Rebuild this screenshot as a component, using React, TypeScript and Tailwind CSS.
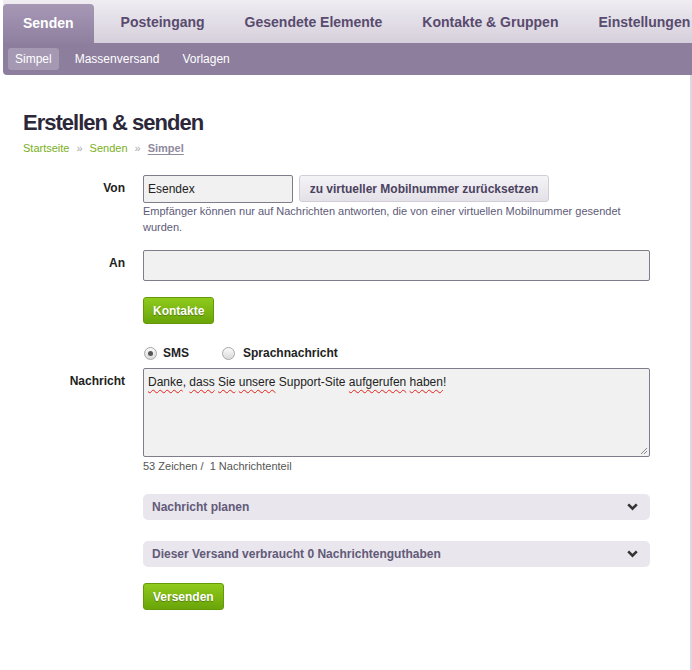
import type { ReactNode } from "react";

const TABS = ["Posteingang", "Gesendete Elemente", "Kontakte & Gruppen", "Einstellungen"];
const SUBNAV = ["Simpel", "Massenversand", "Vorlagen"];

function Chevron() {
    return (
        <svg width="11" height="8" viewBox="0 0 11 8" className="shrink-0">
            <path d="M1.2 1.3 L5.5 5.6 L9.8 1.3" fill="none" stroke="#333" strokeWidth="2.6" strokeLinejoin="miter" />
        </svg>
    );
}

function Radio({ checked }: { checked?: boolean }) {
    return (
        <span className="flex h-[13px] w-[13px] items-center justify-center rounded-full border border-[#a8a8a8] bg-gradient-to-b from-[#fafafa] to-[#dadada]">
            {checked ? <span className="h-[5px] w-[5px] rounded-full bg-[#555]" /> : null}
        </span>
    );
}

function GreenButton({ children }: { children: ReactNode }) {
    return (
        <button className="h-[27px] rounded-[3px] border border-[#649a07] bg-gradient-to-b from-[#8fca1c] to-[#6aa509] px-[9px] text-[12px] font-bold text-white [text-shadow:0_1px_1px_rgba(0,0,0,0.3)]">
            {children}
        </button>
    );
}

function Row({ label, children, className }: { label?: string; children: ReactNode; className?: string }) {
    return (
        <div className={`flex ${className ?? ""}`}>
            <div className="w-[122px] shrink-0 pt-[5px] text-right text-[12px] leading-4 font-bold text-[#222]">{label}</div>
            <div className="ml-[18px] w-[507px]">{children}</div>
        </div>
    );
}

function Accordion({ title }: { title: string }) {
    return (
        <div className="flex h-[26px] items-center justify-between rounded-[5px] bg-[#e9e6ed] pr-[12px] pl-[9px]">
            <span className="text-[12px] font-bold text-[#625a78]">{title}</span>
            <Chevron />
        </div>
    );
}

const squiggle = "underline decoration-wavy decoration-[#e2231a] decoration-1 underline-offset-[3px]";

export default function App() {
    return (
        <div className="h-[670px] w-[692px] overflow-hidden bg-white font-['Liberation_Sans',Arial,sans-serif]">
            <nav className="ml-[3px]">
                <div className="flex h-[43px] items-end overflow-hidden whitespace-nowrap bg-gradient-to-b from-[#efecf2] to-[#d5cfdb] text-[14px] font-bold">
                    <div className="mr-[7px] flex h-[39px] items-center rounded-t-[4px] bg-gradient-to-b from-[#a698b5] to-[#8f80a0] px-5 text-white">
                        Senden
                    </div>
                    {TABS.map((tab) => (
                        <div key={tab} className="flex h-[43px] items-center px-5 pt-[1px] text-[#584b6e]">
                            {tab}
                        </div>
                    ))}
                </div>
                <div className="flex h-[32px] items-center gap-[9px] rounded-bl-[4px] bg-[#8d7e9d] pl-[5px] text-[12px] text-white">
                    {SUBNAV.map((item, i) => (
                        <span
                            key={item}
                            className={`flex h-[22px] items-center rounded-[3px] px-[7px] ${i === 0 ? "bg-[#a498b2]" : ""}`}
                        >
                            {item}
                        </span>
                    ))}
                </div>
            </nav>
            <main className="ml-[3px] h-[595px] border-r-2 border-[#ddd7e3] pt-[35px]">
                <div className="pl-[20px]">
                    <h1 className="text-[22px] leading-[26px] font-bold tracking-[-1px] text-[#2c2839]">Erstellen &amp; senden</h1>
                    <div className="mt-[4px] flex text-[11px] leading-4">
                        <span className="text-[#79b01a]">Startseite</span>
                        <span className="mx-[7px] text-[#aaa]">»</span>
                        <span className="text-[#79b01a]">Senden</span>
                        <span className="mx-[7px] text-[#aaa]">»</span>
                        <span className="font-bold text-[#8f8a9e] underline underline-offset-2">Simpel</span>
                    </div>
                </div>

                <Row label="Von" className="mt-[19px]">
                    <div className="flex gap-[6px]">
                        <div className="flex h-[28px] w-[150px] items-center rounded-[2px] border border-[#7f7d89] bg-[#f1f1f1] pl-[4px] text-[12px] text-[#222]">
                            Esendex
                        </div>
                        <button className="h-[27px] w-[250px] rounded-[3px] border border-[#d2ced8] bg-gradient-to-b from-[#f4f3f6] to-[#e4e1e8] text-[12px] font-bold text-[#4a4260]">
                            zu virtueller Mobilnummer zurücksetzen
                        </button>
                    </div>
                    <p className="text-[11px] leading-4 text-[#5d5a78]">
                        Empfänger können nur auf Nachrichten antworten, die von einer virtuellen Mobilnummer gesendet wurden.
                    </p>
                </Row>

                <Row label="An" className="mt-[15px]">
                    <div className="h-[31px] w-full rounded-[2px] border border-[#7f7d89] bg-[#f1f1f1]" />
                </Row>

                <Row className="mt-[16px]">
                    <GreenButton>Kontakte</GreenButton>
                </Row>

                <Row className="mt-[19px]">
                    <div className="flex h-[20px] items-center text-[12px] font-bold text-[#222]">
                        <span className="ml-[1px]"><Radio checked /></span>
                        <span className="ml-[6px]">SMS</span>
                        <span className="ml-[33px]"><Radio /></span>
                        <span className="ml-[8px]">Sprachnachricht</span>
                    </div>
                </Row>

                <Row label="Nachricht" className="mt-[5px]">
                    <div className="relative h-[89px] w-full rounded-[2px] border border-[#7f7d89] bg-[#f1f1f1] pt-[5px] pl-[4px] text-[12px] leading-4 text-[#222]">
                        <span className={squiggle}>Danke</span>, <span className={squiggle}>dass</span>{" "}
                        <span className={squiggle}>Sie</span> <span className={squiggle}>unsere</span> Support-Site{" "}
                        <span className={squiggle}>aufgerufen</span> <span className={squiggle}>haben</span>!
                        <svg width="8" height="8" viewBox="0 0 8 8" className="absolute right-[1px] bottom-[1px]">
                            <path d="M7 1 L1 7 M7 4 L4 7" stroke="#888" strokeWidth="1" />
                        </svg>
                    </div>
                    <p className="mt-[1px] text-[11px] leading-4 text-[#555]">53 Zeichen /&nbsp; 1 Nachrichtenteil</p>
                </Row>

                <Row className="mt-[20px]">
                    <Accordion title="Nachricht planen" />
                </Row>
                <Row className="mt-[21px]">
                    <Accordion title="Dieser Versand verbraucht 0 Nachrichtenguthaben" />
                </Row>

                <Row className="mt-[16px]">
                    <GreenButton>Versenden</GreenButton>
                </Row>
            </main>
        </div>
    );
}
